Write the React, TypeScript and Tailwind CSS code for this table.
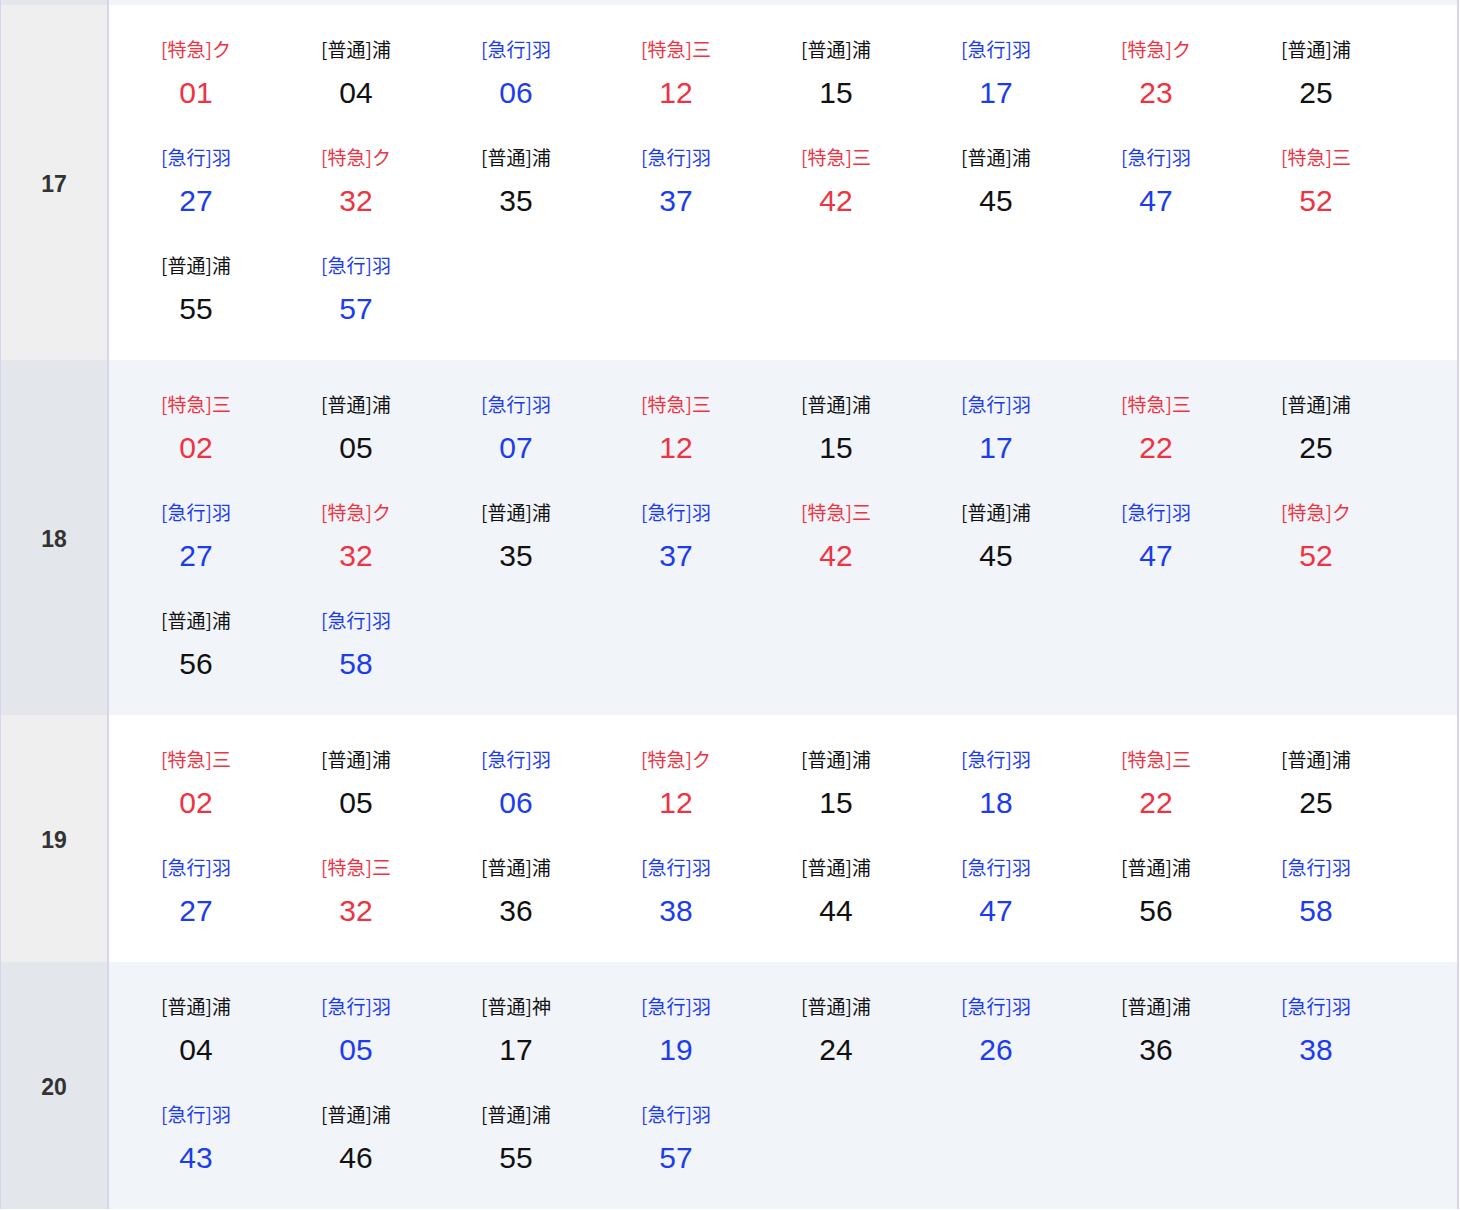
type Kind = '特急' | '普通' | '急行';

type Train = { kind: Kind; dest: string; min: string };

const t = (kind: Kind, dest: string, min: string): Train => ({ kind, dest, min });

const hours: { hour: number; trains: Train[] }[] = [
  {
    hour: 17,
    trains: [
      t('特急', 'ク', '01'), t('普通', '浦', '04'), t('急行', '羽', '06'), t('特急', '三', '12'),
      t('普通', '浦', '15'), t('急行', '羽', '17'), t('特急', 'ク', '23'), t('普通', '浦', '25'),
      t('急行', '羽', '27'), t('特急', 'ク', '32'), t('普通', '浦', '35'), t('急行', '羽', '37'),
      t('特急', '三', '42'), t('普通', '浦', '45'), t('急行', '羽', '47'), t('特急', '三', '52'),
      t('普通', '浦', '55'), t('急行', '羽', '57'),
    ],
  },
  {
    hour: 18,
    trains: [
      t('特急', '三', '02'), t('普通', '浦', '05'), t('急行', '羽', '07'), t('特急', '三', '12'),
      t('普通', '浦', '15'), t('急行', '羽', '17'), t('特急', '三', '22'), t('普通', '浦', '25'),
      t('急行', '羽', '27'), t('特急', 'ク', '32'), t('普通', '浦', '35'), t('急行', '羽', '37'),
      t('特急', '三', '42'), t('普通', '浦', '45'), t('急行', '羽', '47'), t('特急', 'ク', '52'),
      t('普通', '浦', '56'), t('急行', '羽', '58'),
    ],
  },
  {
    hour: 19,
    trains: [
      t('特急', '三', '02'), t('普通', '浦', '05'), t('急行', '羽', '06'), t('特急', 'ク', '12'),
      t('普通', '浦', '15'), t('急行', '羽', '18'), t('特急', '三', '22'), t('普通', '浦', '25'),
      t('急行', '羽', '27'), t('特急', '三', '32'), t('普通', '浦', '36'), t('急行', '羽', '38'),
      t('普通', '浦', '44'), t('急行', '羽', '47'), t('普通', '浦', '56'), t('急行', '羽', '58'),
    ],
  },
  {
    hour: 20,
    trains: [
      t('普通', '浦', '04'), t('急行', '羽', '05'), t('普通', '神', '17'), t('急行', '羽', '19'),
      t('普通', '浦', '24'), t('急行', '羽', '26'), t('普通', '浦', '36'), t('急行', '羽', '38'),
      t('急行', '羽', '43'), t('普通', '浦', '46'), t('普通', '浦', '55'), t('急行', '羽', '57'),
    ],
  },
];

const kindColor: Record<Kind, string> = {
  特急: 'text-[#ee3342]',
  普通: 'text-[#111111]',
  急行: 'text-[#1d3cef]',
};

function TrainCell({ train }: { train: Train }) {
  return (
    <div className={`flex h-[108px] w-[160px] flex-col items-center pt-[18px] ${kindColor[train.kind]}`}>
      <span className="text-[19px] leading-5 font-['Noto_Sans_CJK_JP',sans-serif]">
        [{train.kind}]{train.dest}
      </span>
      <span className="mt-[16px] text-[30px] leading-9 font-['Liberation_Sans',sans-serif]">{train.min}</span>
    </div>
  );
}

export default function App() {
  return (
    <div className="w-[1459px] border-l border-r-2 border-[#d5d6ec] bg-white">
      {/* tail of the previous hour */}
      <div className="flex h-[5px]">
        <div className="w-[108px] border-r-2 border-[#d5d6ec] bg-[#e3e6eb]" />
        <div className="flex-1 bg-[#f1f4f9]" />
      </div>

      {hours.map((row, i) => {
        const even = i % 2 === 1;
        return (
          <div key={row.hour} className="flex">
            <div
              className={`flex w-[108px] shrink-0 items-center justify-center border-r-2 border-[#d5d6ec] pt-[3px] ${
                even ? 'bg-[#e3e6eb]' : 'bg-[#efefef]'
              }`}
            >
              <span className="text-[23px] font-bold text-[#333333] font-['Liberation_Sans',sans-serif]">
                {row.hour}
              </span>
            </div>
            <div className={`flex flex-1 flex-wrap pt-4 pb-[15px] pl-[7px] ${even ? 'bg-[#f1f4f9]' : 'bg-white'}`}>
              {row.trains.map((train, j) => (
                <TrainCell key={j} train={train} />
              ))}
            </div>
          </div>
        );
      })}
    </div>
  );
}
